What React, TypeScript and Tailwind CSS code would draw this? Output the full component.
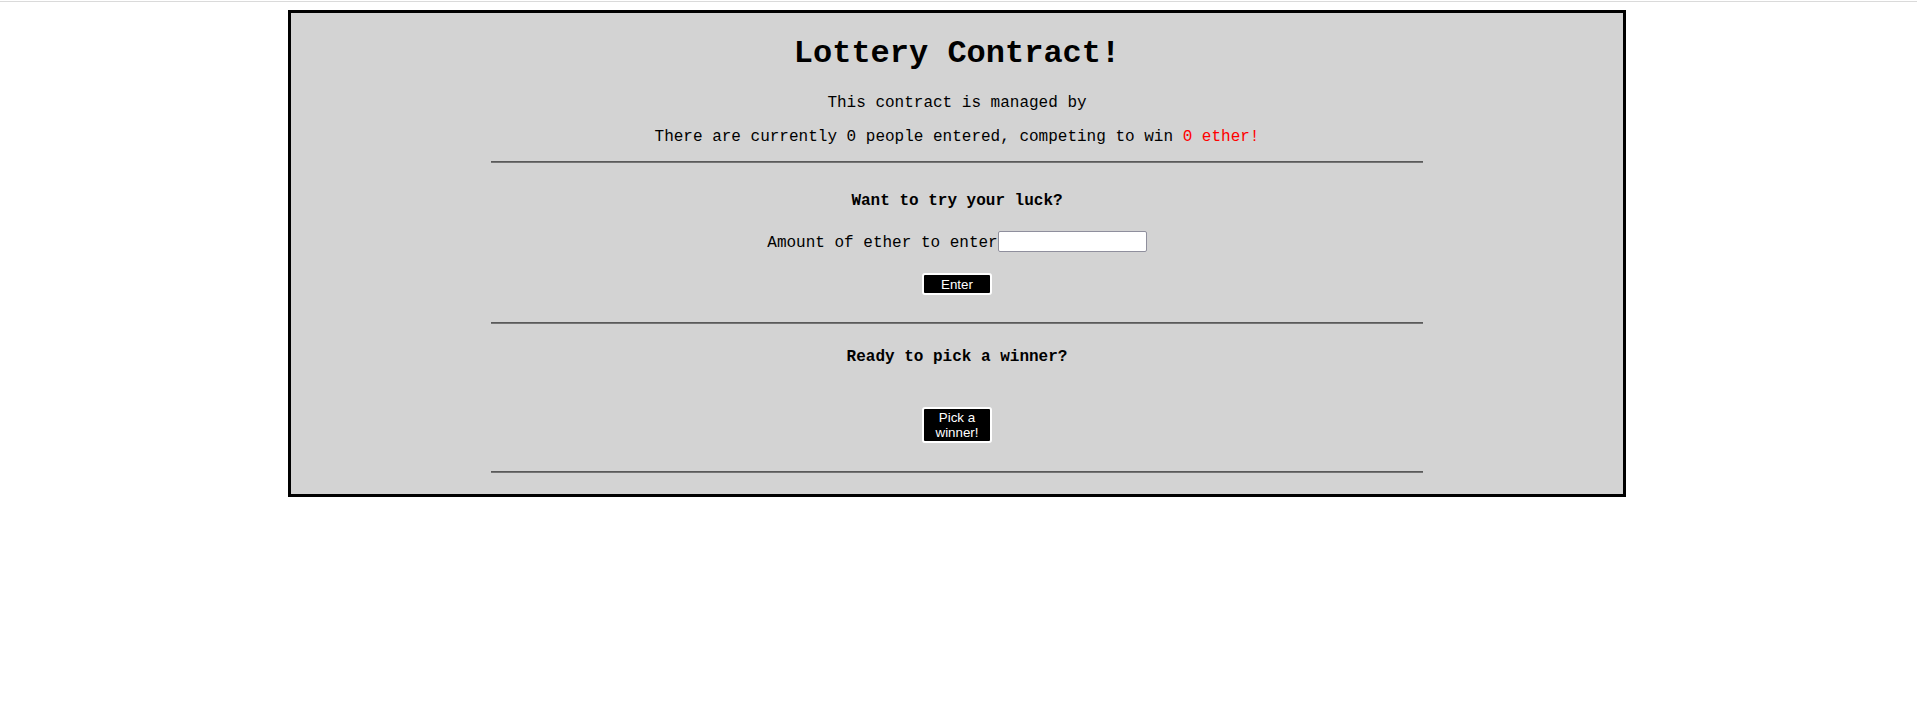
import React from "react";

const mono = { fontFamily: '"Liberation Mono", "Courier New", monospace' };
const sans = { fontFamily: '"Liberation Sans", Arial, sans-serif' };

function Rule({ className }: { className: string }) {
  return (
    <div
      className={`w-[70%] h-[2px] border-t border-b border-t-[#5a5a5a] border-b-[#747474] ${className}`}
    />
  );
}

export default function App() {
  return (
    <div className="min-h-[713px] bg-white pt-px" style={mono}>
      <div className="h-px w-full bg-[#dadada]" />
      <div className="ml-[288px] mt-[8px] w-[1338px] border-[3px] border-black bg-[#d3d3d3] text-black">
        <div className="flex flex-col items-center">
          <h1 className="mt-[23px] text-[32px] leading-[36px] font-bold">Lottery Contract!</h1>
          <p className="mt-[22px] text-[16px] leading-[18px]">This contract is managed by</p>
          <p className="mt-[16px] text-[16px] leading-[18px]">
            There are currently 0 people entered, competing to win{" "}
            <span className="text-[#ff0000]">0 ether!</span>
          </p>
          <Rule className="mt-[15px]" />
          <h4 className="mt-[29px] text-[16px] leading-[18px] font-bold">Want to try your luck?</h4>
          <div className="mt-[21px] flex items-center">
            <label className="text-[16px] leading-[18px] translate-y-px">Amount of ether to enter</label>
            <input
              type="text"
              className="h-[21px] w-[149px] rounded-[2px] border border-[#8f8f9d] bg-white px-[2px] text-[13px] outline-none"
            />
          </div>
          <button
            className="mt-[21px] flex h-[22px] w-[70px] items-center justify-center rounded-[3px] border-2 border-white bg-black text-[13.33px] leading-[15px] text-white"
            style={sans}
          >
            Enter
          </button>
          <Rule className="mt-[27px]" />
          <h4 className="mt-[24px] text-[16px] leading-[18px] font-bold">Ready to pick a winner?</h4>
          <button
            className="mt-[41px] flex h-[36px] w-[70px] items-center justify-center rounded-[3px] border-2 border-white bg-black px-[6px] text-center text-[13.33px] leading-[15px] text-white"
            style={sans}
          >
            Pick a winner!
          </button>
          <Rule className="mt-[28px] mb-[21px]" />
        </div>
      </div>
    </div>
  );
}
